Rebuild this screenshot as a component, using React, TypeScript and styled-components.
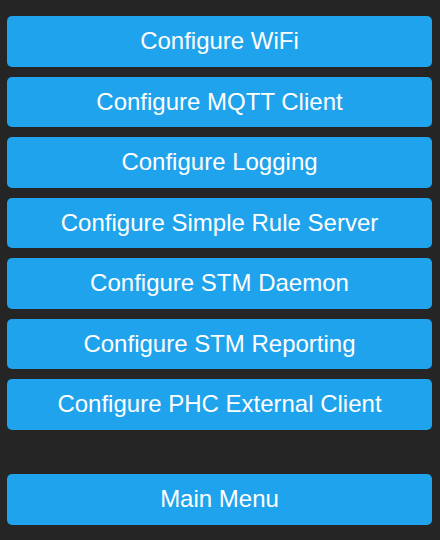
import React from "react";
import styled, { createGlobalStyle } from "styled-components";

const GlobalStyle = createGlobalStyle`
  html, body {
    margin: 0;
    padding: 0;
    background: #252525;
  }
  body {
    font-family: "Liberation Sans", Arial, sans-serif;
  }
`;

const Page = styled.div`
  display: flex;
  flex-direction: column;
  padding: 16px 8px 15px 7px;
  background: #252525;
  min-height: 540px;
  box-sizing: border-box;
`;

const Group = styled.div`
  display: flex;
  flex-direction: column;
  gap: 10px;
`;

const Spacer = styled.div`
  height: 44.5px;
`;

const MenuButton = styled.button`
  display: block;
  width: 100%;
  height: 50.5px;
  border: 0;
  border-radius: 5px;
  background: #1fa3ec;
  color: #ffffff;
  font-family: "Liberation Sans", Arial, sans-serif;
  font-size: 24px;
  line-height: 50.5px;
  padding: 0 0 2px 0;
  margin: 0;
  text-align: center;
  cursor: pointer;
`;

const items = [
  "Configure WiFi",
  "Configure MQTT Client",
  "Configure Logging",
  "Configure Simple Rule Server",
  "Configure STM Daemon",
  "Configure STM Reporting",
  "Configure PHC External Client",
];

export default function App() {
  return (
    <>
      <GlobalStyle />
      <Page>
        <Group>
          {items.map((label) => (
            <MenuButton key={label}>{label}</MenuButton>
          ))}
        </Group>
        <Spacer />
        <MenuButton>Main Menu</MenuButton>
      </Page>
    </>
  );
}
